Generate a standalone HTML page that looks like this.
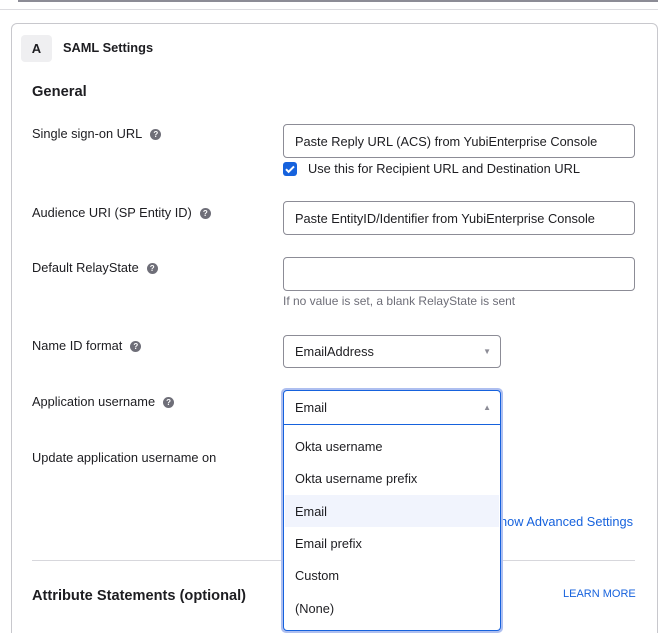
<!DOCTYPE html><html><head><style>
*{box-sizing:border-box}html,body{margin:0;width:658px;height:633px;overflow:hidden}body{background:#fff;font-family:"Liberation Sans",sans-serif;color:#1d1d21;position:relative;font-size:12.8px}
.a{position:absolute}
.q{display:inline-block;width:11px;height:11px;border-radius:50%;background:#6e6e78;color:#fff;font-size:8px;font-weight:bold;text-align:center;line-height:11px;margin-left:8px;vertical-align:1px}
.in{position:absolute;border:1px solid #8c8c96;border-radius:4px;padding-left:11px;font-size:12.8px;display:flex;align-items:center}
.lbl{position:absolute;left:32px;font-size:12.8px}
.opt{position:absolute;left:1px;right:1px;height:32px;padding-left:10px;display:flex;align-items:center;font-size:12.8px}
</style></head><body>
<div class="a" style="left:18px;top:0;width:640px;height:2px;background:#8c8c96"></div>
<div class="a" style="left:0;top:9px;width:658px;height:1px;background:#dcdce0"></div>
<div class="a" style="left:11px;top:23px;width:647px;height:640px;border:1px solid #c8c8cd;border-radius:6px"></div>
<div class="a" style="left:21px;top:35px;width:31px;height:27px;background:#efeff1;border-radius:4px;font-weight:bold;font-size:13px;text-align:center;line-height:27px">A</div>
<div class="a" style="left:63px;top:40px;font-weight:bold;font-size:12.8px">SAML Settings</div>
<div class="a" style="left:32px;top:84px;font-weight:bold;font-size:14.7px">General</div>
<div class="lbl" style="top:126px">Single sign-on URL<span class="q">?</span></div>
<div class="in" style="left:283px;top:124px;width:352px;height:34px">Paste Reply URL (ACS) from YubiEnterprise Console</div>
<div class="a" style="left:283px;top:162px;width:14px;height:14px;background:#1662dd;border-radius:3px"><svg width="14" height="14"><path d="M3 7.2l2.6 2.6L11 4.4" stroke="#fff" stroke-width="2" fill="none"/></svg></div>
<div class="a" style="left:308px;top:161px">Use this for Recipient URL and Destination URL</div>
<div class="lbl" style="top:205px">Audience URI (SP Entity ID)<span class="q">?</span></div>
<div class="in" style="left:283px;top:201px;width:352px;height:34px">Paste EntityID/Identifier from YubiEnterprise Console</div>
<div class="lbl" style="top:260px">Default RelayState<span class="q">?</span></div>
<div class="in" style="left:283px;top:257px;width:352px;height:34px"></div>
<div class="a" style="left:283px;top:294px;font-size:12px;color:#6e6e78">If no value is set, a blank RelayState is sent</div>
<div class="lbl" style="top:338px">Name ID format<span class="q">?</span></div>
<div class="in" style="left:283px;top:335px;width:218px;height:33px">EmailAddress<span style="position:absolute;right:9px;font-size:8px;color:#8c8c96">▼</span></div>
<div class="lbl" style="top:394px">Application username<span class="q">?</span></div>
<div class="lbl" style="top:450px">Update application username on</div>
<div class="a" style="left:500px;top:514px;color:#1662dd;font-size:12.8px">how Advanced Settings</div>
<div class="a" style="left:32px;top:560px;width:603px;height:1px;background:#d7d7dc"></div>
<div class="a" style="left:32px;top:588px;font-weight:bold;font-size:14.6px">Attribute Statements (optional)</div>
<div class="a" style="left:563px;top:588px;color:#1662dd;font-size:11px">LEARN MORE</div>
<div class="a" style="left:281px;top:388px;width:222px;height:245px;border:3px solid #aebff0;border-radius:5px"></div>
<div class="a" style="left:283px;top:390px;width:218px;height:241px;background:#fff;border:1px solid #1662dd;border-radius:4px">
<div class="a" style="left:0;right:0;top:0;height:34px;border-bottom:1px solid #1662dd;padding-left:11px;display:flex;align-items:center">Email<span style="position:absolute;right:9px;font-size:8px;color:#8c8c96">▲</span></div>
<div class="opt" style="top:39px">Okta username</div>
<div class="opt" style="top:71px">Okta username prefix</div>
<div class="opt" style="top:104px;background:#f1f4fd">Email</div>
<div class="opt" style="top:136px">Email prefix</div>
<div class="opt" style="top:168px">Custom</div>
<div class="opt" style="top:201px">(None)</div>
</div>
</body></html>
